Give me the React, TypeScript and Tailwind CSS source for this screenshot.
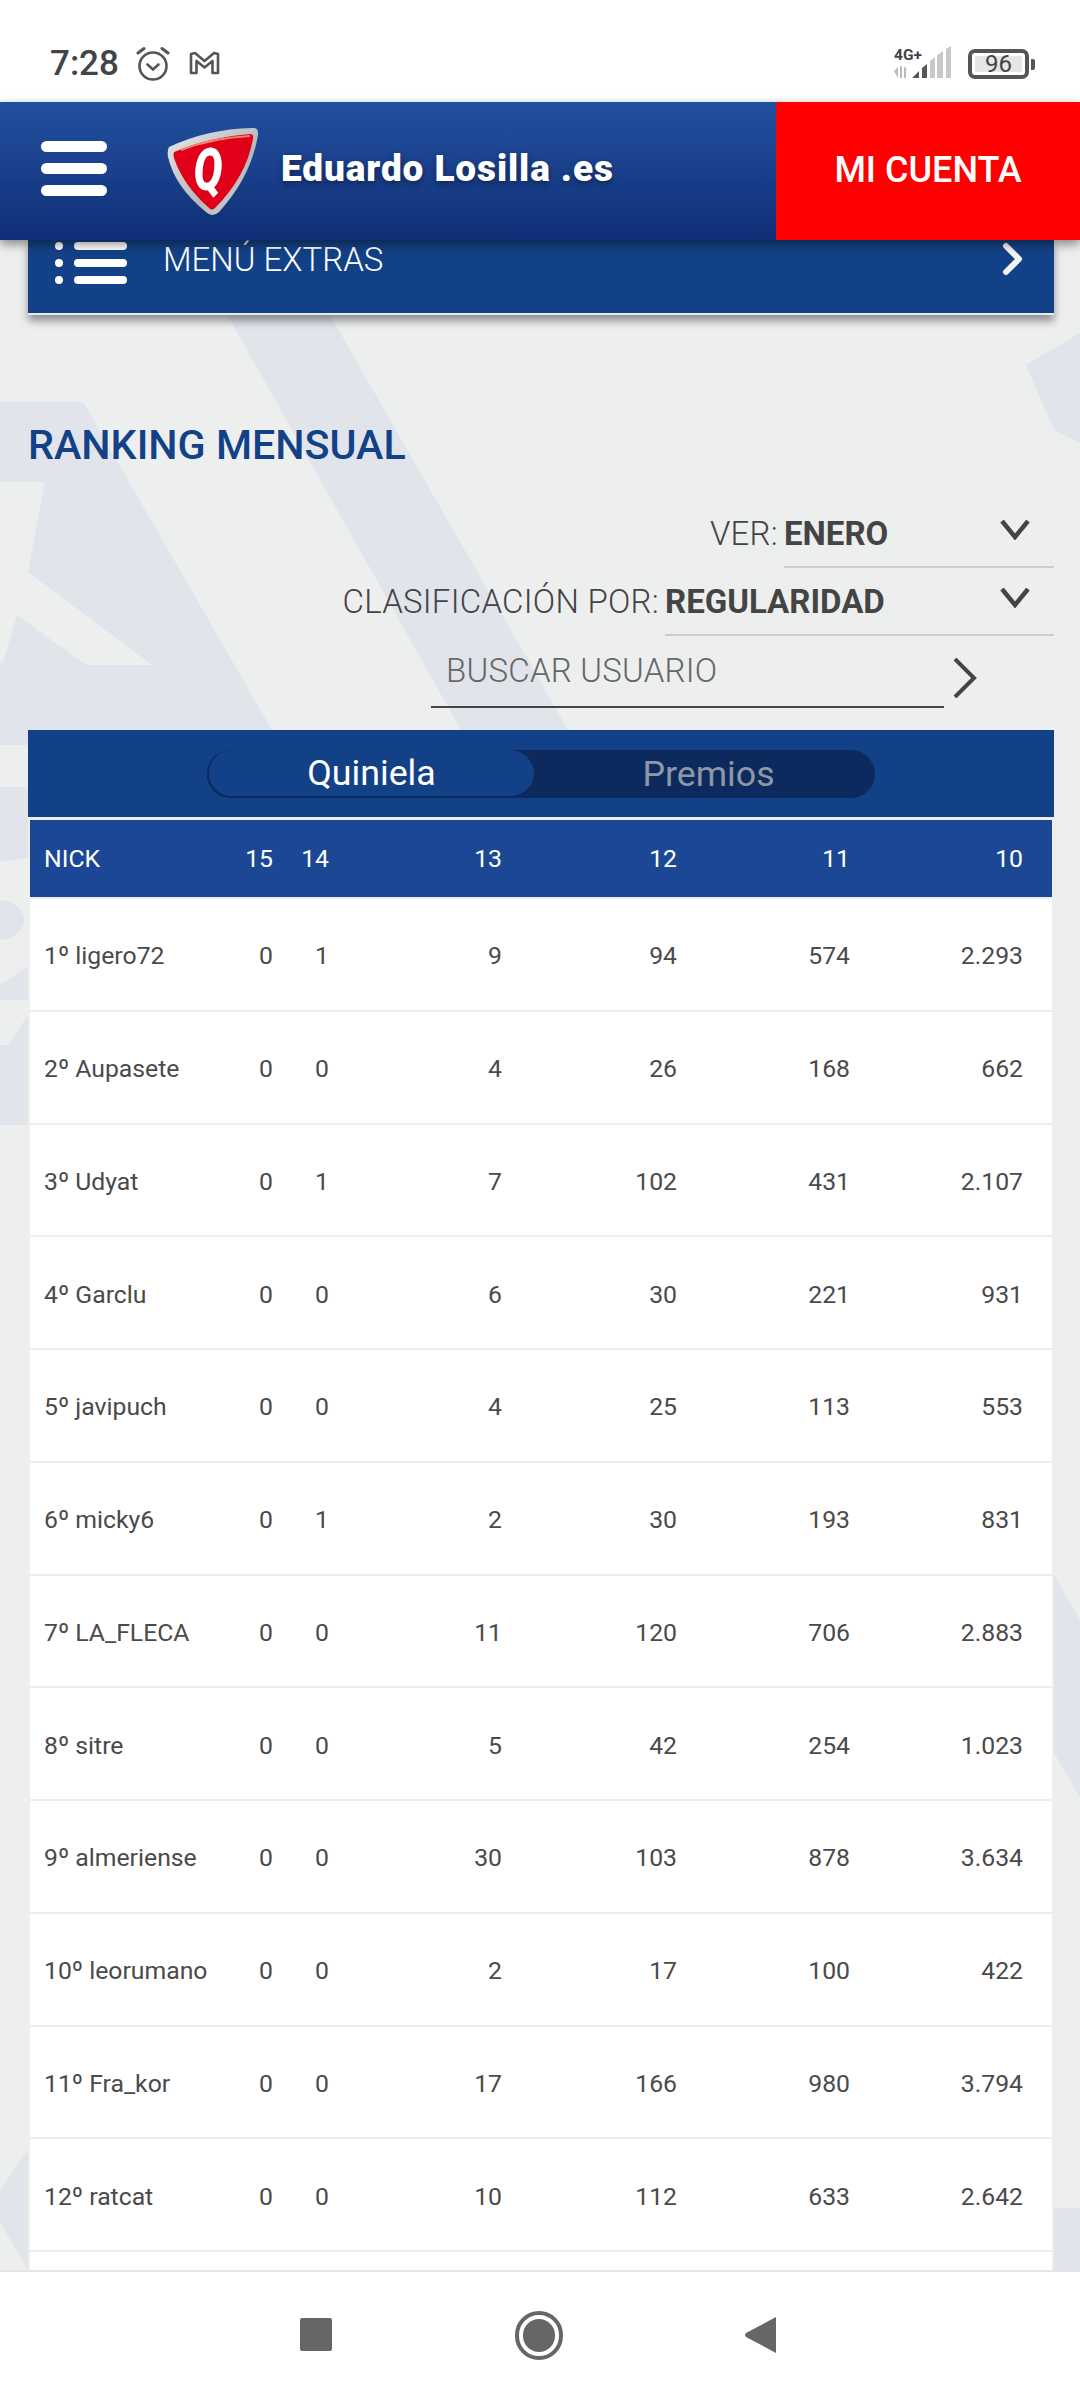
import React from "react";

const rows: [string, string, string, string, string, string, string][] = [
  ["1º ligero72", "0", "1", "9", "94", "574", "2.293"],
  ["2º Aupasete", "0", "0", "4", "26", "168", "662"],
  ["3º Udyat", "0", "1", "7", "102", "431", "2.107"],
  ["4º Garclu", "0", "0", "6", "30", "221", "931"],
  ["5º javipuch", "0", "0", "4", "25", "113", "553"],
  ["6º micky6", "0", "1", "2", "30", "193", "831"],
  ["7º LA_FLECA", "0", "0", "11", "120", "706", "2.883"],
  ["8º sitre", "0", "0", "5", "42", "254", "1.023"],
  ["9º almeriense", "0", "0", "30", "103", "878", "3.634"],
  ["10º leorumano", "0", "0", "2", "17", "100", "422"],
  ["11º Fra_kor", "0", "0", "17", "166", "980", "3.794"],
  ["12º ratcat", "0", "0", "10", "112", "633", "2.642"],
];

function Backdrop() {
  return (
    <svg className="absolute inset-0 z-0" width="1080" height="2400" viewBox="0 0 1080 2400" fill="#e1e4ea">
      <polygon points="185,240 287,240 568,730 461,730" />
      <path fillRule="evenodd" d="M0,402 L83,402 L272,730 L28,730 L0,730 Z M0,482 L45,482 L28,572 L152,665 L86,665 L17,615 L3,663 L0,663 Z" />
      <polygon points="1026,365 1080,333 1080,443 1054,430" />
      <polygon points="0,745 0,720 28,720 28,745" />
      <polygon points="0,787 28,787 28,858 0,862" />
      <ellipse cx="-2" cy="920" rx="26" ry="20" />
      <polygon points="0,985 28,966 28,1000 0,1000" />
      <polygon points="0,1045 8,1045 28,1015 28,1125 0,1125" />
      <polygon points="0,2190 28,2150 28,2270 0,2222" />
      <polygon points="1054,1575 1080,1620 1080,1797 1054,1753" />
      <polygon points="1054,2208 1080,2208 1080,2271 1054,2271" />
    </svg>
  );
}

function StatusBar() {
  return (
    <div className="h-[102px] bg-white flex items-start relative shrink-0">
      <span className="ml-[50px] mt-[44px] text-[35px] leading-[40px] font-medium text-[#444]">7:28</span>
      <svg className="ml-[17px] mt-[46px]" width="34" height="36" viewBox="0 0 34 36" fill="none" stroke="#555" strokeWidth="2.6" strokeLinecap="round">
        <circle cx="17" cy="20" r="13.5" />
        <path d="M11.5 18.5 L17 23.5 L22.5 18.5" />
        <path d="M2 7 L8 2.5 M32 7 L26 2.5" strokeWidth="3" />
      </svg>
      <svg className="ml-[19px] mt-[51px]" width="31" height="24" viewBox="0 0 31 24" fill="none" stroke="#555" strokeWidth="2.6" strokeLinejoin="round">
        <path d="M2 3 L6 2 L15.5 10 L25 2 L29 3 V22 H23.5 V10 L15.5 16.5 L7.5 10 V22 H2 Z" />
      </svg>
      <div className="absolute left-[894px] top-[46px] w-[60px] h-[34px]">
        <span className="absolute left-0 top-[2px] text-[15.5px] leading-[14px] font-bold text-[#444]">4G+</span>
        <svg className="absolute left-0 top-0" width="60" height="34" viewBox="0 0 60 34">
          <path d="M0 25 L4 21 V32 Z M6 20 H8 V32 H6 Z M10 20 L13 24 H12 V32 H10 Z" fill="#bbb" />
          <path d="M18 32 L25 25 V32 Z M28 22 L33 18 V32 H28 Z" fill="#555" />
          <path d="M36 15 L41 11 V32 H36 Z M43 9 L49 5 V32 H43 Z M52 3 L57 0 V32 H52 Z" fill="#c8c8c8" />
        </svg>
      </div>
      <div className="absolute left-[968px] top-[49px] w-[61px] h-[30px] rounded-[7px] border-[4px] border-[#555] flex items-center justify-center">
        <div className="w-[47px] h-[16px] bg-[#e6e6e6] flex items-center justify-center">
          <span className="text-[24px] leading-[24px] text-[#444]">96</span>
        </div>
      </div>
      <div className="absolute left-[1031px] top-[59px] w-[4px] h-[11px] rounded-r-[2px] bg-[#555]" />
    </div>
  );
}

function Logo() {
  return (
    <svg width="91" height="89" viewBox="0 0 91 89" className="ml-[60px] shrink-0">
      <defs>
        <linearGradient id="silver" x1="0" y1="0" x2="1" y2="1">
          <stop offset="0" stopColor="#e8e8e8" />
          <stop offset="0.6" stopColor="#b4b8bd" />
          <stop offset="1" stopColor="#dcdcdc" />
        </linearGradient>
      </defs>
      <path d="M2 20 Q40 2 85 1 Q92 0 91 8 Q84 50 52 85 Q45 91 39 85 Q8 60 1 30 Q0 23 2 20 Z" fill="url(#silver)" />
      <path d="M7 25 Q42 10 83 7 Q87 7 86 12 Q79 50 48 81 Q45 84 42 81 Q16 58 7 31 Q6 27 7 25 Z" fill="#e0001a" />
      <path d="M14 23 Q45 11 83 9" fill="none" stroke="#f4816f" strokeWidth="2" />
      <text x="0" y="0" textAnchor="middle" transform="translate(41 63) scale(0.72 1)" fontFamily="Roboto, sans-serif" fontWeight="900" fontStyle="italic" fontSize="60" fill="#fff">Q</text>
    </svg>
  );
}

function Header() {
  return (
    <div className="h-[138px] shrink-0 relative z-20 flex bg-gradient-to-b from-[#21509f] via-[#1a408c] to-[#0e2e75] shadow-[0_4px_10px_rgba(0,0,0,0.45)]">
      <div className="flex items-center flex-1">
        <div className="ml-[41px] w-[66px] flex flex-col gap-[11px] mt-[-5px]">
          <div className="h-[11px] rounded-full bg-white" />
          <div className="h-[11px] rounded-full bg-white" />
          <div className="h-[11px] rounded-full bg-white" />
        </div>
        <Logo />
        <span className="ml-[23px] text-[37px] tracking-[0.9px] leading-[40px] font-black text-white [text-shadow:0_3px_6px_rgba(0,0,0,0.4)] mt-[-4px] whitespace-nowrap">
          Eduardo Losilla .es
        </span>
      </div>
      <div className="w-[304px] bg-[#ff0000] flex items-center justify-center">
        <span className="text-[36px] leading-[40px] font-medium text-white mt-[-2px]">MI CUENTA</span>
      </div>
    </div>
  );
}

function MenuExtras() {
  return (
    <div className="h-[75px] flex items-start bg-[#134187] border-b-2 border-[#e4e9f2] shadow-[0_6px_8px_rgba(0,0,0,0.4)]">
      <div className="ml-[27px] mt-[2px] flex flex-col gap-[9px] w-[72px]">
        {[0, 1, 2].map((i) => (
          <div key={i} className="flex items-center gap-[11px] h-[8px]">
            <div className="w-[8px] h-[8px] rounded-full bg-white" />
            <div className="w-[53px] h-[8px] rounded-full bg-white" />
          </div>
        ))}
      </div>
      <span className="ml-[36px] mt-[1px] text-[33px] leading-[38px] font-light text-white">MENÚ EXTRAS</span>
      <svg className="ml-auto mr-[30px] mt-[2px]" width="22" height="34" viewBox="0 0 22 34" fill="none" stroke="#f4f4f4" strokeWidth="6" strokeLinecap="round" strokeLinejoin="round">
        <path d="M4 4 L17 17 L4 30" />
      </svg>
    </div>
  );
}

function Chevron() {
  return (
    <svg className="ml-auto mr-[24px] mb-[6px]" width="30" height="20" viewBox="0 0 30 20" fill="none" stroke="#444" strokeWidth="4.5">
      <path d="M2 1 L15 17 L28 1" />
    </svg>
  );
}

function Filters() {
  return (
    <div className="flex flex-col">
      <div className="h-[68px] flex justify-end items-stretch">
        <span className="self-center text-[33px] leading-[40px] tracking-[0.25px] font-light text-[#444] mr-[6px]">VER:</span>
        <div className="w-[270px] flex items-center border-b-2 border-[#ccc]">
          <span className="mt-[2px] text-[33px] leading-[40px] font-bold text-[#444]">ENERO</span>
          <Chevron />
        </div>
      </div>
      <div className="h-[68px] flex justify-end items-stretch">
        <span className="self-center text-[33px] leading-[40px] tracking-[0.25px] font-light text-[#444] mr-[6px]">CLASIFICACIÓN POR:</span>
        <div className="w-[389px] flex items-center border-b-2 border-[#ccc]">
          <span className="mt-[2px] text-[33px] leading-[40px] font-bold text-[#444]">REGULARIDAD</span>
          <Chevron />
        </div>
      </div>
      <div className="h-[72px] flex justify-end items-stretch">
        <div className="w-[513px] flex items-center border-b-2 border-[#444] pl-[15px]">
          <span className="text-[33px] leading-[40px] tracking-[0.25px] font-light text-[#666]">BUSCAR USUARIO</span>
        </div>
        <svg className="ml-[9px] mr-[77px] mt-[22px]" width="24" height="40" viewBox="0 0 24 40" fill="none" stroke="#444" strokeWidth="4">
          <path d="M2 1 L21 20 L2 39" />
        </svg>
      </div>
    </div>
  );
}

function Tabs() {
  return (
    <div className="mt-[22px] h-[87px] bg-[#134187] flex items-start">
      <div className="ml-[179px] mt-[20px] w-[668px] h-[48px] rounded-full bg-[#0d2a5e] flex">
        <div className="w-[327px] h-[48px] rounded-full bg-[#134187] border-l-2 border-b-2 border-[#0d2a5e] flex items-center justify-center">
          <span className="text-[35.75px] leading-[40px] text-white">Quiniela</span>
        </div>
        <div className="flex-1 flex items-center justify-center pl-[8px]">
          <span className="text-[35.75px] leading-[40px] text-[#8f97a6]">Premios</span>
        </div>
      </div>
    </div>
  );
}

const cols = "grid grid-cols-[170px_59px_56px_173px_175px_173px_173px] pl-[14px] pr-[28px] items-center";

function Table() {
  return (
    <div className="mt-[3px] border-x-2 border-[#eeeeee] bg-white">
      <div className={`${cols} h-[77px] bg-[#1c4795] text-white text-[24.75px] leading-[30px] font-normal`}>
        <span>NICK</span>
        {["15", "14", "13", "12", "11", "10"].map((h) => (
          <span key={h} className="text-right">{h}</span>
        ))}
      </div>
      <div className="h-[2px] bg-[#e8eef5]" />
      {rows.map((r) => (
        <div key={r[0]} className={`${cols} h-[112.75px] pt-[4px] border-b-2 border-[#eeeeee] text-[24.75px] leading-[30px] text-[#4a4a4a]`}>
          <span className="whitespace-nowrap">{r[0]}</span>
          {r.slice(1).map((c, i) => (
            <span key={i} className="text-right">{c}</span>
          ))}
        </div>
      ))}
      <div className="h-[112px]" />
    </div>
  );
}

function NavBar() {
  return (
    <div className="absolute left-0 right-0 top-[2270px] h-[130px] z-30 bg-white border-t-2 border-[#e6e6e6] flex items-start">
      <div className="absolute left-[300px] top-[46px] w-[32px] h-[33px] rounded-[2px] bg-[#666]" />
      <div className="absolute left-[515px] top-[39px] w-[48px] h-[49px] rounded-full border-[4px] border-[#666] flex items-center justify-center">
        <div className="w-[32px] h-[33px] rounded-full bg-[#666]" />
      </div>
      <svg className="absolute left-[744px] top-[44px]" width="33" height="38" viewBox="0 0 33 38" fill="#666">
        <path d="M32 1 V37 L2 21 Q0 19 2 17 Z" />
      </svg>
    </div>
  );
}

export default function App() {
  return (
    <div className="relative w-[1080px] h-[2400px] overflow-hidden bg-[#edefef] [font-family:Roboto,sans-serif] flex flex-col">
      <Backdrop />
      <StatusBar />
      <Header />
      <div className="relative z-10 pl-[28px] pr-[26px] flex-1 min-h-0">
        <MenuExtras />
        <h1 className="mt-[106px] mb-[31px] text-[41.25px] leading-[48px] font-medium text-[#134187]">RANKING MENSUAL</h1>
        <Filters />
        <Tabs />
        <Table />
      </div>
      <NavBar />
    </div>
  );
}
